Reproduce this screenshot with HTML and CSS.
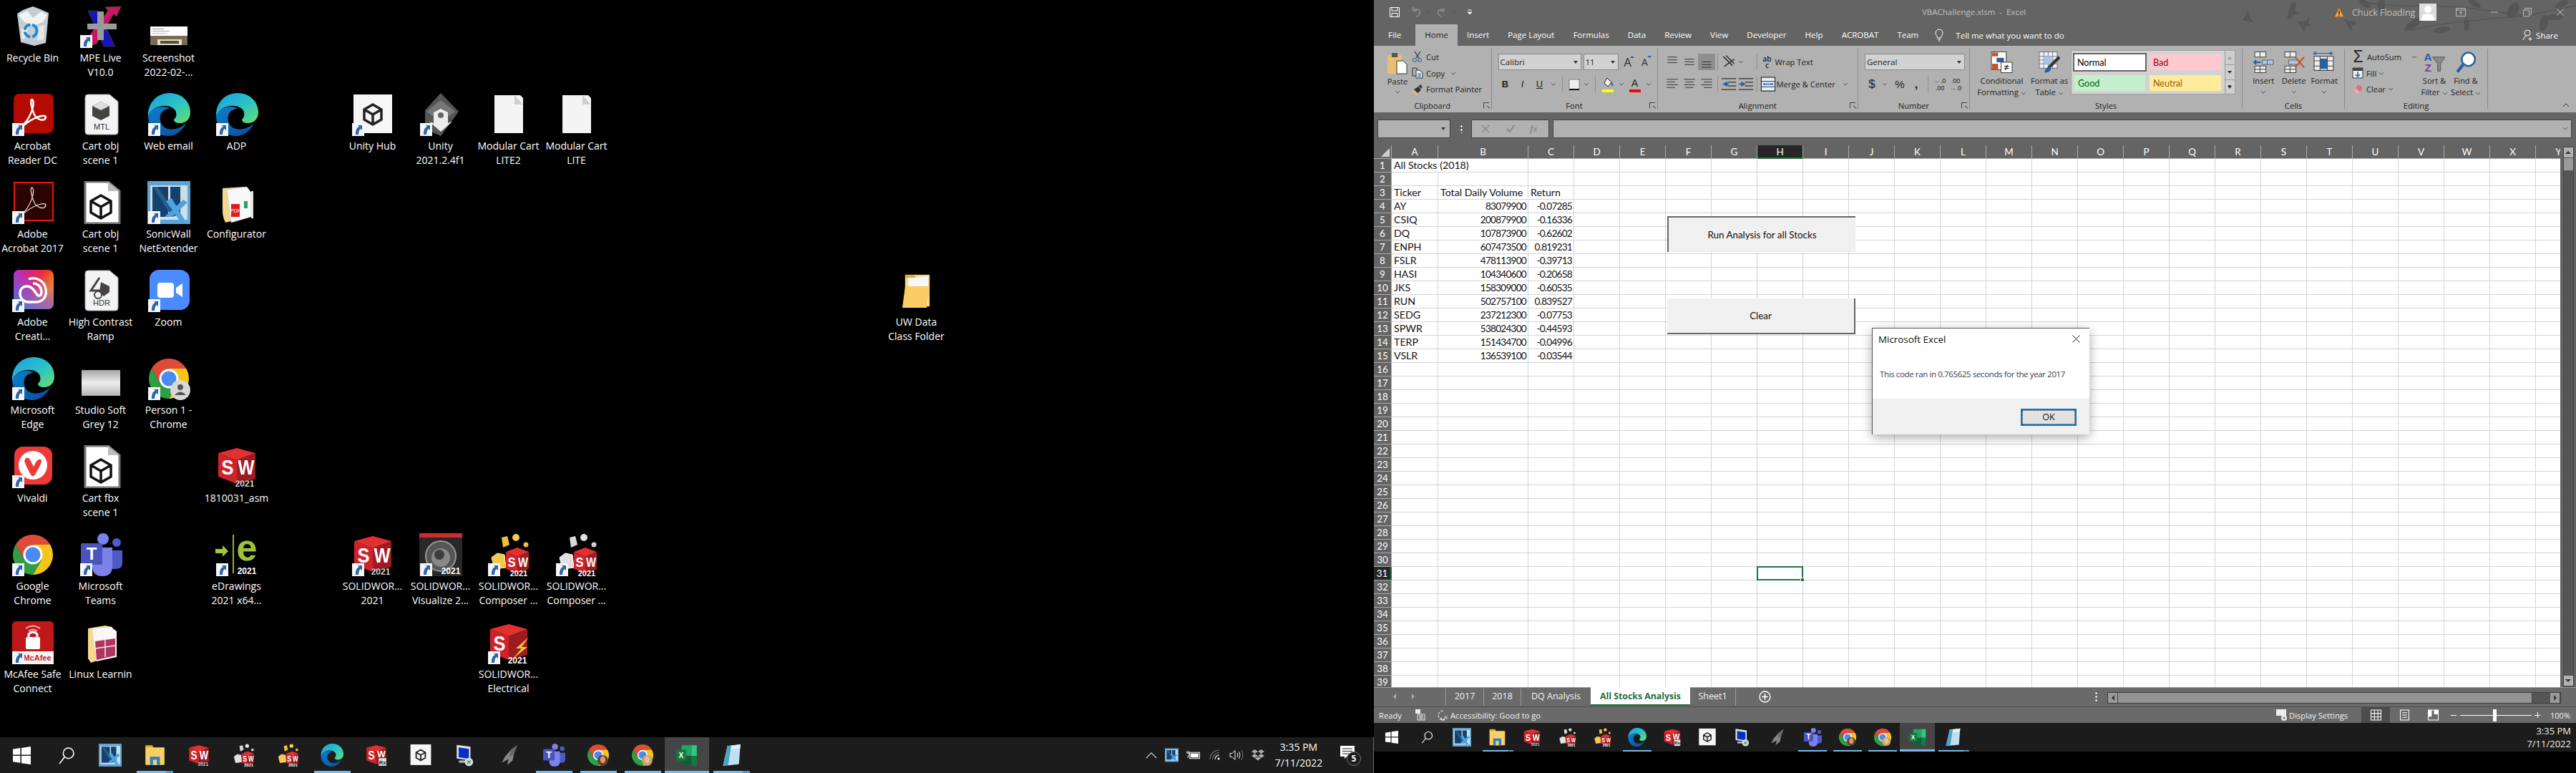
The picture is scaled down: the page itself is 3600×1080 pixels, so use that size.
FILE: index.html
```html
<!DOCTYPE html>
<html lang="en">
<head>
<meta charset="utf-8">
<title>Dual monitor desktop with Excel</title>
<link rel="stylesheet" href="styles.css">
</head>
<body>
<svg class="sprite" aria-hidden="true">
<defs>
<linearGradient id="edgeG" x1="0" y1="0" x2="1" y2="1"><stop offset="0" stop-color="#1b9de2"/><stop offset=".55" stop-color="#2cc4c4"/><stop offset="1" stop-color="#6be06a"/></linearGradient>
<linearGradient id="edgeB" x1="0" y1="0" x2="1" y2="1"><stop offset="0" stop-color="#0d7fd0"/><stop offset="1" stop-color="#0b4c98"/></linearGradient>
<linearGradient id="ccG" x1="0" y1="0" x2="1" y2="1"><stop offset="0" stop-color="#e0107c"/><stop offset=".4" stop-color="#f6301f"/><stop offset=".7" stop-color="#f7b500"/><stop offset="1" stop-color="#7fd35a"/></linearGradient>
<linearGradient id="ccB" x1="0" y1="1" x2="1" y2="0"><stop offset="0" stop-color="#1e88e5"/><stop offset=".5" stop-color="#a13de0" stop-opacity=".7"/><stop offset="1" stop-color="#e0107c" stop-opacity="0"/></linearGradient>
<linearGradient id="greyG" x1="0" y1="0" x2="0" y2="1"><stop offset="0" stop-color="#a6a6a6"/><stop offset=".5" stop-color="#eeeeee"/><stop offset="1" stop-color="#b4b4b4"/></linearGradient>
</defs>
</svg>
<svg class="sprite-lib" aria-hidden="true">
<symbol id="short" viewBox="0 0 17 18"><rect width="17" height="18" fill="#f4f6f8"/><path d="M5 16 C5 9 7 6 10 5 L8 3 L14 3 L14 10 L12 8 C10 9 9 12 9 16Z" fill="#2a62a8"/></symbol>
<symbol id="recycle" viewBox="0 0 60 60"><path d="M8 12 L16 7 L24 4 L30 2 L38 5 L52 11 L48 53 L32 57 L13 52Z" fill="#c6cdd1"/><path d="M10 14 L22 8 L30 18 L42 9 L50 14 L44 24 L32 28 L18 24Z" fill="#f1f3f4"/><path d="M14 34 L24 28 L20 46 L14 48Z" fill="#e9ecee"/><path d="M38 30 L46 28 L45 48 L36 50Z" fill="#e3e6e8"/><circle cx="27" cy="36" r="8.500" fill="none" stroke="#1f86d6" stroke-width="4" stroke-dasharray="11 3"/></symbol>
<symbol id="mpe" viewBox="0 0 60 60"><path d="M12 8 L26 8 L50 58 L34 58Z" fill="#1616b8" stroke="#333"/><path d="M58 2 L52 16 L48 12 L24 54 L12 58 L10 48 L40 8 L36 3Z" fill="#c8175f" stroke="#444"/><path d="M25 9 H34 V26 H52 V34 H34 V49 H25 V34 H11 V26 H25Z" fill="#9a9a9a"/></symbol>
<symbol id="thumb" viewBox="0 0 60 60"><rect x="4" y="30" width="52" height="26" fill="#fff"/><rect x="7" y="33" width="16" height="1" fill="#999"/><rect x="7" y="36" width="24" height="1" fill="#aaa"/><rect x="7" y="39" width="20" height="1" fill="#bbb"/><rect x="4" y="43" width="52" height="13" fill="#7d6a52"/><rect x="14" y="48" width="34" height="8" fill="#ddd"/><rect x="18" y="50" width="26" height="4" fill="#552"/></symbol>
<symbol id="acro" viewBox="0 0 60 60"><rect x="3" y="1" width="56" height="55" rx="8" fill="#b30b00"/><path d="M14 46 C26 38 34 14 29 9 C26 8 27 20 32 30 C36 38 46 40 48 34 C48 28 30 34 16 46" fill="none" stroke="#fff" stroke-width="2.500"/></symbol>
<symbol id="acro17" viewBox="0 0 60 60"><rect x="4" y="2" width="54" height="53" fill="#2a0400" stroke="#e21a0a" stroke-width="2"/><path d="M14 46 C26 38 34 14 29 9 C26 8 27 20 32 30 C36 38 46 40 48 34 C48 28 30 34 16 46" fill="none" stroke="#e8d9d9" stroke-width="1.300"/></symbol>
<symbol id="mtl" viewBox="0 0 60 60"><path d="M12 2 H42 L54 12 V54 Q54 58 50 58 H12 Q8 58 8 54 V6 Q8 2 12 2Z" fill="#f3f3f3" stroke="#aaa"/><path d="M30 12 L42 18 V32 L30 38 L18 32 V18Z" fill="#444"/><path d="M30 12 L42 18 L30 24 L18 18Z" fill="#ddd"/><text x="31" y="51" class="svgt" font-size="11" text-anchor="middle" fill="#333">MTL</text></symbol>
<symbol id="hdr" viewBox="0 0 60 60"><path d="M12 2 H42 L54 12 V54 Q54 58 50 58 H12 Q8 58 8 54 V6 Q8 2 12 2Z" fill="#f3f3f3" stroke="#aaa"/><path d="M28 12 L16 30 L28 30 V34" fill="none" stroke="#444" stroke-width="3"/><path d="M30 18 L42 24 V32 L34 38 L28 32Z" fill="#444"/><circle cx="26" cy="36" r="5" fill="#f3f3f3" stroke="#444" stroke-width="2"/><text x="31" y="51" class="svgt" font-size="11" text-anchor="middle" fill="#333">HDR</text></symbol>
<symbol id="obj" viewBox="0 0 60 60"><path d="M8 1 H40 L56 14 V59 H8Z" fill="#fff" stroke="#777" stroke-width="3"/><path d="M40 1 V14 H56Z" fill="#bbb"/><path d="M30 20 L44 28 V44 L30 52 L16 44 V28Z M30 36 L16 28 M30 36 L44 28 M30 36 V52" fill="none" stroke="#111" stroke-width="3.500"/></symbol>
<symbol id="edge" viewBox="0 0 60 60"><path d="M31 0 C48 0 60 12 60 27 C60 37 53 42 46 42 C40 42 37 40 37 37 C42 33 42 24 34 20 C24 15 6 18 1 33 C0 14 13 0 31 0Z" fill="url(#edgeG)"/><path d="M1 33 C5 19 24 16 31 22 C20 22 15 32 19 42 C25 55 44 52 54 42 C50 52 40 60 29 60 C13 60 2 48 1 33Z" fill="url(#edgeB)"/></symbol>
<symbol id="sonic" viewBox="0 0 60 60"><rect width="60" height="60" fill="#5aa4d6"/><rect x="4" y="6" width="52" height="48" fill="#cfdde6"/><rect x="7" y="8" width="22" height="42" fill="#14426e"/><path d="M8 8 L14 8 L42 48 L34 50Z" fill="#245f8e"/><rect x="32" y="8" width="14" height="38" fill="#14426e"/><path d="M24 50 L50 26 L56 30 L34 50Z M26 28 L34 24 L52 54 L44 54Z" fill="#4ea3e2"/></symbol>
<symbol id="folderdoc" viewBox="0 0 60 60"><path d="M10 10 L40 8 L44 50 L14 58 Q10 50 10 42Z" fill="#f6d78e"/><path d="M16 12 L44 8 L50 16 V50 L22 58Z" fill="#f8f8f8" stroke="#bbb" stroke-width=".5"/><rect x="22" y="32" width="12" height="18" fill="#dc1e1e"/><text x="28" y="44" class="svgt" font-size="7" text-anchor="middle" fill="#fff">PDF</text><rect x="40" y="28" width="5" height="10" fill="#27a260"/><rect x="50" y="14" width="3" height="38" fill="#e6e6e6"/></symbol>
<symbol id="folder" viewBox="0 0 60 60"><path d="M12 10 L36 6 L46 8 V48 L16 58 L12 52Z" fill="#f6d98f"/><path d="M18 10 L44 8 L52 14 V50 L24 56Z" fill="#f8f8f8"/><path d="M22 28 L50 24 V48 L24 54Z" fill="#b0345e"/><path d="M22 38 L50 34 M36 26 V50" stroke="#eee" stroke-width="1.500"/></symbol>
<symbol id="yfolder" viewBox="0 0 60 60"><path d="M14 8 H48 V52 H14Z" fill="#f6d98f" stroke="#caa24e" stroke-width=".5"/><path d="M18 12 L46 10 V50 L20 54Z" fill="#f7f7f7"/><path d="M14 24 L48 24 L44 54 L10 54Z" fill="#f9cd63"/><path d="M14 8 H26 L29 12 H14Z" fill="#e2ab3a"/></symbol>
<symbol id="cc" viewBox="0 0 60 60"><rect x="3" y="1" width="56" height="55" rx="8" fill="url(#ccG)"/><rect x="3" y="1" width="56" height="55" rx="8" fill="url(#ccB)"/><path d="M24 14 C34 10 46 16 48 28 C50 38 44 46 34 46 H24 C16 46 12 40 12 34 C12 28 16 24 22 24 C28 24 32 30 36 36 C38 38 42 38 42 32 C42 26 38 20 30 20" fill="none" stroke="#fff" stroke-width="3.500"/></symbol>
<symbol id="zoom" viewBox="0 0 60 60"><rect x="3" y="1" width="56" height="56" rx="13" fill="#4a8cff"/><rect x="14" y="19" width="23" height="21" rx="4" fill="#fff"/><path d="M40 26 L49 20 V39 L40 33Z" fill="#fff"/></symbol>
<symbol id="grey" viewBox="0 0 60 60"><rect x="3" y="18" width="54" height="36" fill="url(#greyG)"/></symbol>
<symbol id="chrome" viewBox="0 0 60 60"><path d="M5.750 16 A28 28 0 0 1 54.250 16 L30 16 L17.900 37Z" fill="#dd4b39"/><path d="M54.250 16 A28 28 0 0 1 30 58 L42.100 37 L30 16Z" fill="#f5c518"/><path d="M30 58 A28 28 0 0 1 5.750 16 L17.900 37 L42.100 37Z" fill="#2f9e44"/><circle cx="30" cy="30" r="13.500" fill="#fff"/><circle cx="30" cy="30" r="10.500" fill="#4a8af4"/></symbol>
<symbol id="person" viewBox="0 0 60 60"><use href="#chrome"/><circle cx="46" cy="46" r="14" fill="#d8d8d8"/><circle cx="46" cy="42" r="4" fill="#555"/><path d="M38 53 Q46 44 54 53Z" fill="#555"/></symbol>
<symbol id="vivaldi" viewBox="0 0 60 60"><rect x="4" y="2" width="53" height="53" rx="12" fill="#ef3939"/><circle cx="30" cy="28" r="20" fill="#fff"/><path d="M20 18 C24 16 26 20 28 24 L31 30 L34 24 C36 20 42 18 42 22 C42 26 36 36 33 41 C31 44 29 44 27 41 C24 36 19 26 18 22Z" fill="#ef3939"/></symbol>
<symbol id="sw" viewBox="0 0 60 60"><path d="M30 4 L56 11 L30 21 L4 11Z" fill="#e23030"/><path d="M4 11 L30 21 V54 L4 44Z" fill="#cf2229"/><path d="M30 21 L56 11 V47 L30 54Z" fill="#9c1c22"/><text x="17" y="41" class="svgb" font-size="30" text-anchor="middle" textLength="17" lengthAdjust="spacingAndGlyphs" fill="#fff">S</text><text x="43" y="41" class="svgb" font-size="30" text-anchor="middle" textLength="23" lengthAdjust="spacingAndGlyphs" fill="#fff">W</text><text x="41" y="58" class="svgb" font-size="12" text-anchor="middle" fill="#fff" stroke="#000" stroke-width=".3">2021</text></symbol>
<symbol id="swrx" viewBox="0 0 60 60"><path d="M30 4 L56 11 L30 21 L4 11Z" fill="#e23030"/><path d="M4 11 L30 21 V54 L4 44Z" fill="#cf2229"/><path d="M30 21 L56 11 V47 L30 54Z" fill="#9c1c22"/><text x="17" y="41" class="svgb" font-size="30" text-anchor="middle" textLength="17" lengthAdjust="spacingAndGlyphs" fill="#fff">S</text><text x="43" y="36" class="svgb" font-size="24" text-anchor="middle" textLength="22" lengthAdjust="spacingAndGlyphs" fill="#fff">W</text><rect x="36" y="38" width="20" height="20" fill="#ddd"/><text x="46" y="54" class="svgb" font-size="14" text-anchor="middle" fill="#222">Rx</text></symbol>
<symbol id="edraw" viewBox="0 0 60 60"><rect x="24" y="2" width="2" height="54" fill="#8cb42c"/><path d="M0 22 H10 V17 L18 25 L10 33 V28 H0Z" fill="#a3c639"/><text x="44" y="38" class="svgb" font-size="52" text-anchor="middle" fill="#9cc13a">e</text><text x="44" y="57" class="svgb" font-size="12" text-anchor="middle" fill="#fff">2021</text></symbol>
<symbol id="visual" viewBox="0 0 60 60"><rect width="60" height="60" fill="#282828"/><rect width="60" height="6" fill="#d22a2a"/><circle cx="30" cy="32" r="21" fill="#555" stroke="#999" stroke-width="2"/><circle cx="30" cy="34" r="13" fill="#888"/><circle cx="28" cy="30" r="7" fill="#3c3c3c"/><text x="44" y="57" class="svgb" font-size="12" text-anchor="middle" fill="#fff">2021</text></symbol>
<symbol id="compY" viewBox="0 0 60 60"><path d="M6 34 L14 28 L24 30 L26 48 L10 50Z" fill="#f5c94a" stroke="#fff3c0"/><path d="M20 6 L28 4 L31 16 L22 20Z" fill="#f5bd3a"/><circle cx="40" cy="6" r="5" fill="#f5c94a"/><circle cx="54" cy="16" r="3.500" fill="#f5bd3a"/><path d="M42 20 L58 26 L42 33 L26 26Z" fill="#e23030"/><path d="M26 26 L42 33 V56 L26 50Z" fill="#cf2229"/><path d="M42 33 L58 26 V50 L42 56Z" fill="#9c1c22"/><text x="34" y="47" class="svgb" font-size="19" text-anchor="middle" textLength="11" lengthAdjust="spacingAndGlyphs" fill="#fff">S</text><text x="50" y="47" class="svgb" font-size="19" text-anchor="middle" textLength="14" lengthAdjust="spacingAndGlyphs" fill="#fff">W</text><text x="44" y="60" class="svgb" font-size="11" text-anchor="middle" fill="#fff">2021</text></symbol>
<symbol id="compW" viewBox="0 0 60 60"><path d="M6 34 L14 28 L24 30 L26 48 L10 50Z" fill="#e0e0e0" stroke="#fff"/><path d="M20 6 L28 4 L31 16 L22 20Z" fill="#d8d8d8"/><circle cx="40" cy="6" r="5" fill="#e0e0e0"/><circle cx="54" cy="16" r="3.500" fill="#d0d0d0"/><path d="M42 20 L58 26 L42 33 L26 26Z" fill="#e23030"/><path d="M26 26 L42 33 V56 L26 50Z" fill="#cf2229"/><path d="M42 33 L58 26 V50 L42 56Z" fill="#9c1c22"/><text x="34" y="47" class="svgb" font-size="19" text-anchor="middle" textLength="11" lengthAdjust="spacingAndGlyphs" fill="#fff">S</text><text x="50" y="47" class="svgb" font-size="19" text-anchor="middle" textLength="14" lengthAdjust="spacingAndGlyphs" fill="#fff">W</text><text x="44" y="60" class="svgb" font-size="11" text-anchor="middle" fill="#fff">2021</text></symbol>
<symbol id="elec" viewBox="0 0 60 60"><path d="M30 4 L56 11 L30 21 L4 11Z" fill="#e23030"/><path d="M4 11 L30 21 V54 L4 44Z" fill="#cf2229"/><path d="M30 21 L56 11 V47 L30 54Z" fill="#9c1c22"/><text x="17" y="41" class="svgb" font-size="30" text-anchor="middle" textLength="17" lengthAdjust="spacingAndGlyphs" fill="#fff">S</text><path d="M58 22 L40 38 L48 38 L36 52 L56 36 L48 36Z" fill="#f0c83c"/><text x="42" y="59" class="svgb" font-size="12" text-anchor="middle" fill="#fff">2021</text></symbol>
<symbol id="teams" viewBox="0 0 60 60"><circle cx="33" cy="8" r="8" fill="#7b83eb"/><circle cx="52" cy="13" r="6" fill="#5059c9"/><path d="M42 24 H60 V42 Q60 50 50 50 L42 50Z" fill="#5059c9"/><path d="M18 20 H46 V46 Q46 60 32 60 Q18 60 18 46Z" fill="#7b83eb"/><rect x="2" y="14" width="30" height="30" rx="2" fill="#4b53bc"/><text x="17" y="37" class="svgb" font-size="24" text-anchor="middle" fill="#fff">T</text></symbol>
<symbol id="mcafee" viewBox="0 0 60 60"><path d="M1 6 Q1 0 7 0 H53 Q59 0 59 6 V44 H1Z" fill="#c01818"/><rect x="1" y="42" width="58" height="18" fill="#f5f5f5"/><rect x="20" y="22" width="20" height="17" rx="2" fill="#fff"/><path d="M24 23 V18 Q30 12 36 18 V23" fill="none" stroke="#fff" stroke-width="3"/><path d="M20 10 Q30 3 40 10 M24 14 Q30 9 36 14" fill="none" stroke="#f0b0b0" stroke-width="2"/><text x="36" y="55" class="svgb" font-size="11" text-anchor="middle" fill="#d02020">McAfee</text></symbol>
<symbol id="uhub" viewBox="0 0 60 60"><rect x="3" y="2" width="54" height="54" fill="#f6f6f6"/><path d="M30 16 L42 23 V37 L30 44 L18 37 V23Z M30 30 L42 23 M30 30 V44 M30 30 L18 23" fill="none" stroke="#222" stroke-width="3.500"/></symbol>
<symbol id="unity" viewBox="0 0 60 60"><path d="M30 0 L55 26 L30 60 L8 50 V24Z" fill="#555"/><path d="M30 10 L50 26 L30 40 L10 26Z" fill="#777"/><path d="M30 22 L40 27 V42 L46 40 L30 54 L14 40 L20 42 V27Z" fill="#ececec"/><circle cx="30" cy="31" r="4" fill="#666"/></symbol>
<symbol id="blank" viewBox="0 0 60 60"><path d="M10 3 H46 L50 7 V56 H10Z" fill="#f4f4f4"/><path d="M38 3 L50 16 H38Z" fill="#cfcfcf"/></symbol>
<symbol id="win" viewBox="0 0 24 24"><path d="M0 3.500 L10 2 V11 H0Z M11.500 1.800 L24 0 V11 H11.500Z M0 12.500 H10 V21.800 L0 20.500Z M11.500 12.500 H24 V24 L11.500 22.200Z" fill="#fff"/></symbol>
<symbol id="search" viewBox="0 0 24 24"><circle cx="15" cy="9" r="7" fill="none" stroke="#fff" stroke-width="1.500"/><path d="M10 14 L3 23" stroke="#fff" stroke-width="1.500"/></symbol>
<symbol id="explorer" viewBox="0 0 60 60"><path d="M6 4 H24 L28 12 H6Z" fill="#e9a43a"/><rect x="6" y="10" width="50" height="46" rx="2" fill="#fbd063"/><rect x="18" y="34" width="26" height="22" fill="#2f80c8"/><rect x="26" y="42" width="10" height="14" fill="#fbd063"/></symbol>
<symbol id="net" viewBox="0 0 60 60"><rect x="8" y="2" width="36" height="36" fill="#dde4ef" transform="skewY(8)"/><rect x="13" y="8" width="27" height="26" fill="#0a2ec2" transform="skewY(8)"/><rect x="14" y="44" width="22" height="6" fill="#bbb"/><circle cx="40" cy="48" r="11" fill="#d9d9d9"/><path d="M35 52 L45 44 M37 44 L43 52" stroke="#27a74a" stroke-width="2.500"/></symbol>
<symbol id="rocket" viewBox="0 0 60 60"><path d="M50 4 L42 26 L38 44 L24 56 L28 40 L10 50 L18 34 L34 16Z" fill="#888"/><path d="M50 4 L42 26 L30 36 L34 16Z" fill="#666"/></symbol>
<symbol id="chromeface" viewBox="0 0 60 60"><use href="#chrome"/><circle cx="42" cy="44" r="14" fill="#6a3a2a"/><ellipse cx="42" cy="42" rx="7" ry="9" fill="#d99a7c"/></symbol>
<symbol id="chromeface2" viewBox="0 0 60 60"><use href="#chrome"/><circle cx="42" cy="44" r="14" fill="#c9a06a"/><ellipse cx="42" cy="42" rx="7" ry="9" fill="#e7bda0"/></symbol>
<symbol id="xl" viewBox="0 0 60 60"><path d="M16 4 H42 V32 H16Z" fill="#21a366"/><path d="M42 4 H54 Q56 4 56 6 V32 H42Z" fill="#33c481"/><path d="M16 32 H42 V58 H18 Q16 58 16 56Z" fill="#185c37"/><path d="M42 32 H56 V56 Q56 58 54 58 H42Z" fill="#107c41"/><rect x="2" y="16" width="26" height="28" rx="2" fill="#107c41"/><text x="15" y="37" class="svgb" font-size="19" text-anchor="middle" fill="#fff">X</text></symbol>
<symbol id="note" viewBox="0 0 60 60"><path d="M20 6 L54 2 L50 54 L8 58Z" fill="#bfe0ef"/><path d="M20 6 L54 2 L53 12 L18 16Z" fill="#dff1f8"/><path d="M8 58 L20 6 L30 5 L22 56Z" fill="#4aa5c4"/></symbol>
<symbol id="chev" viewBox="0 0 8 5"><path d="M1 1 L4 4 L7 1" fill="none" stroke="#555" stroke-width="1"/></symbol>
<symbol id="alT" viewBox="0 0 24 24"><path d="M5 5 H19 M5 9 H19 M5 13 H19" stroke="#333"/></symbol>
<symbol id="alM" viewBox="0 0 24 24"><path d="M5 8 H19 M5 12 H19 M5 16 H19" stroke="#333"/></symbol>
<symbol id="alB" viewBox="0 0 24 24"><path d="M5 12 H19 M5 16 H19 M5 20 H19" stroke="#333"/></symbol>
<symbol id="jL" viewBox="0 0 24 24"><path d="M4 5 H20 M4 9 H16 M4 13 H20 M4 17 H16" stroke="#333"/></symbol>
<symbol id="jC" viewBox="0 0 24 24"><path d="M4 5 H20 M6 9 H18 M4 13 H20 M6 17 H18" stroke="#333"/></symbol>
<symbol id="jR" viewBox="0 0 24 24"><path d="M4 5 H20 M8 9 H20 M4 13 H20 M8 17 H20" stroke="#333"/></symbol>
</svg>

<div class="screens">
<section class="monitor-left">
<div class="desktop">
<div class="dgrid">
<div class="di c0 r0"><div class="dico"><svg class="ic"><use href="#recycle"/></svg></div><div class="dl">Recycle Bin</div></div>
<div class="di c1 r0"><div class="dico"><svg class="ic"><use href="#mpe"/></svg><svg class="sc"><use href="#short"/></svg></div><div class="dl">MPE Live<br>V10.0</div></div>
<div class="di c2 r0"><div class="dico"><svg class="ic"><use href="#thumb"/></svg></div><div class="dl">Screenshot<br>2022-02-...</div></div>
<div class="di c0 r1"><div class="dico"><svg class="ic"><use href="#acro"/></svg><svg class="sc"><use href="#short"/></svg></div><div class="dl">Acrobat<br>Reader DC</div></div>
<div class="di c1 r1"><div class="dico"><svg class="ic"><use href="#mtl"/></svg></div><div class="dl">Cart obj<br>scene 1</div></div>
<div class="di c2 r1"><div class="dico"><svg class="ic"><use href="#edge"/></svg><svg class="sc"><use href="#short"/></svg></div><div class="dl">Web email</div></div>
<div class="di c3 r1"><div class="dico"><svg class="ic"><use href="#edge"/></svg><svg class="sc"><use href="#short"/></svg></div><div class="dl">ADP</div></div>
<div class="di c5 r1"><div class="dico"><svg class="ic"><use href="#uhub"/></svg><svg class="sc"><use href="#short"/></svg></div><div class="dl">Unity Hub</div></div>
<div class="di c6 r1"><div class="dico"><svg class="ic"><use href="#unity"/></svg><svg class="sc"><use href="#short"/></svg></div><div class="dl">Unity<br>2021.2.4f1</div></div>
<div class="di c7 r1"><div class="dico"><svg class="ic"><use href="#blank"/></svg></div><div class="dl">Modular Cart<br>LITE2</div></div>
<div class="di c8 r1"><div class="dico"><svg class="ic"><use href="#blank"/></svg></div><div class="dl">Modular Cart<br>LITE</div></div>
<div class="di c0 r2"><div class="dico"><svg class="ic"><use href="#acro17"/></svg><svg class="sc"><use href="#short"/></svg></div><div class="dl">Adobe<br>Acrobat 2017</div></div>
<div class="di c1 r2"><div class="dico"><svg class="ic"><use href="#obj"/></svg></div><div class="dl">Cart obj<br>scene 1</div></div>
<div class="di c2 r2"><div class="dico"><svg class="ic"><use href="#sonic"/></svg><svg class="sc"><use href="#short"/></svg></div><div class="dl">SonicWall<br>NetExtender</div></div>
<div class="di c3 r2"><div class="dico"><svg class="ic"><use href="#folderdoc"/></svg></div><div class="dl">Configurator</div></div>
<div class="di c0 r3"><div class="dico"><svg class="ic"><use href="#cc"/></svg><svg class="sc"><use href="#short"/></svg></div><div class="dl">Adobe<br>Creati...</div></div>
<div class="di c1 r3"><div class="dico"><svg class="ic"><use href="#hdr"/></svg></div><div class="dl">High Contrast<br>Ramp</div></div>
<div class="di c2 r3"><div class="dico"><svg class="ic"><use href="#zoom"/></svg><svg class="sc"><use href="#short"/></svg></div><div class="dl">Zoom</div></div>
<div class="di c13 r3"><div class="dico"><svg class="ic"><use href="#yfolder"/></svg></div><div class="dl">UW Data<br>Class Folder</div></div>
<div class="di c0 r4"><div class="dico"><svg class="ic"><use href="#edge"/></svg><svg class="sc"><use href="#short"/></svg></div><div class="dl">Microsoft<br>Edge</div></div>
<div class="di c1 r4"><div class="dico"><svg class="ic"><use href="#grey"/></svg></div><div class="dl">Studio Soft<br>Grey 12</div></div>
<div class="di c2 r4"><div class="dico"><svg class="ic"><use href="#person"/></svg><svg class="sc"><use href="#short"/></svg></div><div class="dl">Person 1 -<br>Chrome</div></div>
<div class="di c0 r5"><div class="dico"><svg class="ic"><use href="#vivaldi"/></svg><svg class="sc"><use href="#short"/></svg></div><div class="dl">Vivaldi</div></div>
<div class="di c1 r5"><div class="dico"><svg class="ic"><use href="#obj"/></svg></div><div class="dl">Cart fbx<br>scene 1</div></div>
<div class="di c3 r5"><div class="dico"><svg class="ic"><use href="#sw"/></svg></div><div class="dl">1810031_asm</div></div>
<div class="di c0 r6"><div class="dico"><svg class="ic"><use href="#chrome"/></svg><svg class="sc"><use href="#short"/></svg></div><div class="dl">Google<br>Chrome</div></div>
<div class="di c1 r6"><div class="dico"><svg class="ic"><use href="#teams"/></svg><svg class="sc"><use href="#short"/></svg></div><div class="dl">Microsoft<br>Teams</div></div>
<div class="di c3 r6"><div class="dico"><svg class="ic"><use href="#edraw"/></svg><svg class="sc"><use href="#short"/></svg></div><div class="dl">eDrawings<br>2021 x64...</div></div>
<div class="di c5 r6"><div class="dico"><svg class="ic"><use href="#sw"/></svg><svg class="sc"><use href="#short"/></svg></div><div class="dl">SOLIDWOR...<br>2021</div></div>
<div class="di c6 r6"><div class="dico"><svg class="ic"><use href="#visual"/></svg><svg class="sc"><use href="#short"/></svg></div><div class="dl">SOLIDWOR...<br>Visualize 2...</div></div>
<div class="di c7 r6"><div class="dico"><svg class="ic"><use href="#compY"/></svg><svg class="sc"><use href="#short"/></svg></div><div class="dl">SOLIDWOR...<br>Composer ...</div></div>
<div class="di c8 r6"><div class="dico"><svg class="ic"><use href="#compW"/></svg><svg class="sc"><use href="#short"/></svg></div><div class="dl">SOLIDWOR...<br>Composer ...</div></div>
<div class="di c0 r7"><div class="dico"><svg class="ic"><use href="#mcafee"/></svg><svg class="sc"><use href="#short"/></svg></div><div class="dl">McAfee Safe<br>Connect</div></div>
<div class="di c1 r7"><div class="dico"><svg class="ic"><use href="#folder"/></svg></div><div class="dl">Linux Learnin</div></div>
<div class="di c7 r7"><div class="dico"><svg class="ic"><use href="#elec"/></svg><svg class="sc"><use href="#short"/></svg></div><div class="dl">SOLIDWOR...<br>Electrical</div></div>
</div>
</div>
<footer class="taskbar tb-left">
<div class="tb-start"><svg class="tb-win"><use href="#win"/></svg></div>
<div class="tb-start"><svg class="tb-search"><use href="#search"/></svg></div>
<div class="tb-i"><svg><use href="#sonic"/></svg></div>
<div class="tb-i on stacked"><svg><use href="#explorer"/></svg></div>
<div class="tb-i"><svg><use href="#sw"/></svg></div>
<div class="tb-i"><svg><use href="#compW"/></svg></div>
<div class="tb-i"><svg><use href="#compY"/></svg></div>
<div class="tb-i on"><svg><use href="#edge"/></svg></div>
<div class="tb-i"><svg><use href="#swrx"/></svg></div>
<div class="tb-i"><svg><use href="#uhub"/></svg></div>
<div class="tb-i"><svg><use href="#net"/></svg></div>
<div class="tb-i"><svg><use href="#rocket"/></svg></div>
<div class="tb-i on"><svg><use href="#teams"/></svg></div>
<div class="tb-i on"><svg><use href="#chromeface"/></svg></div>
<div class="tb-i on"><svg><use href="#chromeface2"/></svg></div>
<div class="tb-i active"><svg><use href="#xl"/></svg></div>
<div class="tb-i on stacked"><svg><use href="#note"/></svg></div>
<div class="tray">
<svg class="t-chev" viewBox="0 0 18 10"><path d="M1 9 L9 1 L17 9" fill="none" stroke="#eee" stroke-width="1.300"/></svg>
<svg class="t-n"><use href="#sonic"/></svg>
<svg class="t-bat" viewBox="0 0 22 14"><path d="M2 1 V4 M4.500 1 V4 M1 4 H5.500 V6 Q3 8 3 11" fill="none" stroke="#fff"/><rect x="5.500" y="3" width="15" height="9" fill="none" stroke="#fff"/><rect x="7" y="4.500" width="12" height="6" fill="#fff"/></svg>
<svg class="t-wifi" viewBox="0 0 16 16"><path d="M1 14 A13 13 0 0 1 14 1 M4.500 14 A9.500 9.500 0 0 1 14 4.500" fill="none" stroke="#777" stroke-width="1.100"/><path d="M8 14 A6 6 0 0 1 14 8" fill="none" stroke="#eee" stroke-width="1.200"/><circle cx="13" cy="13" r="1.500" fill="#fff"/></svg>
<svg class="t-vol" viewBox="0 0 20 16"><path d="M1 5.500 H4 L8 1.500 V14.500 L4 10.500 H1Z" fill="none" stroke="#eee"/><path d="M11 5 Q13 8 11 11 M13.500 3 Q16.500 8 13.500 13" fill="none" stroke="#eee"/><path d="M17 1 Q20.500 8 17 15" fill="none" stroke="#777"/></svg>
<svg class="t-drop" viewBox="0 0 18 16"><path d="M4.500 0 L9 3 L4.500 6 L0 3Z M13.500 0 L18 3 L13.500 6 L9 3Z M4.500 6 L9 9 L4.500 12 L0 9Z M13.500 6 L18 9 L13.500 12 L9 9Z M9 10 L13 12.800 L9 15.500 L5 12.800Z" fill="#aaa"/></svg>
<div class="clock"><span>3:35 PM</span><span>7/11/2022</span></div>
<div class="notif"><svg class="t-note" viewBox="0 0 20 18"><path d="M0 0 H20 V15 H9 L6 18 V15 H0Z" fill="#fff"/><path d="M3 4 H17 M3 7.500 H17 M3 11 H12" stroke="#222"/></svg><span class="nbadge">5</span></div>
<div class="desk-edge"></div>
</div>
</footer>
</section>

<section class="monitor-right">
<main class="excel">
<div class="head">
<svg class="birds" viewBox="0 0 500 64" aria-hidden="true">
<g fill="#565656">
<path d="M34 28 L42 14 L44 24 L50 31 L40 30Z"/><path d="M96 25 L102 4 L108 3 L108 16 L116 18 L106 21 L100 27Z"/><path d="M110 31 L122 29 L128 23 L126 33 L131 35 L122 37 L120 45 L116 37Z"/><path d="M175 26 L185 30 L190 28 L193 33 L186 36 L187 45 L181 36Z"/>
<ellipse cx="205" cy="5" rx="9" ry="4" transform="rotate(30 205 5)"/><ellipse cx="228" cy="8" rx="5" ry="10"/><ellipse cx="272" cy="34" rx="14" ry="5" transform="rotate(-35 272 34)"/><ellipse cx="312" cy="42" rx="12" ry="4" transform="rotate(-10 312 42)"/><ellipse cx="347" cy="34" rx="4" ry="9"/><ellipse cx="412" cy="14" rx="7" ry="12" transform="rotate(30 412 14)"/><ellipse cx="455" cy="32" rx="6" ry="12" transform="rotate(15 455 32)"/><ellipse cx="470" cy="24" rx="12" ry="4"/><ellipse cx="358" cy="5" rx="10" ry="4" transform="rotate(30 358 5)"/><ellipse cx="480" cy="6" rx="10" ry="4" transform="rotate(-25 480 6)"/>
</g>
<path d="M200 2 C240 10 290 8 340 10 L430 22 L500 8 M270 42 C310 32 360 28 430 22" fill="none" stroke="#565656" stroke-width="1.500"/>
</svg>
<header class="titlebar">
<div class="qat">
<svg class="q-save" viewBox="0 0 14 14"><path d="M.5.5 H13.500 V13.500 H.5Z M3 .5 V5 H11 V.5 M3 13.500 V8.500 H11 V13.500" fill="none" stroke="#fff"/></svg>
<svg class="q-undo" viewBox="0 0 16 16"><path d="M4 1 V6 H9 M4 6 Q8 2 12 5 Q16 10 8 15" fill="none" stroke="#8a8a8a" stroke-width="2"/></svg>
<svg class="chev q-c1"><use href="#chev"/></svg>
<svg class="q-redo" viewBox="0 0 16 16"><path d="M12 1 V6 H7 M12 6 Q8 2 4 5 Q0 10 8 15" fill="none" stroke="#8a8a8a" stroke-width="2"/></svg>
<svg class="chev q-c2"><use href="#chev"/></svg>
<svg class="q-cust" viewBox="0 0 8 8"><path d="M1 1 H7 M1 4 H7 L4 7Z" stroke="#eee" fill="#eee"/></svg>
</div>
<div class="doc-title">VBAChallenge.xlsm  -  Excel</div>
<div class="win-area">
<svg class="warn" viewBox="0 0 14 14"><path d="M7 1 L13 13 H1Z" fill="#e9a35a" stroke="#a75b18"/><rect x="6.400" y="5" width="1.200" height="5" fill="#222"/><rect x="6.400" y="10.800" width="1.200" height="1.200" fill="#222"/></svg>
<span class="user">Chuck Floading</span>
<svg class="avatar" viewBox="0 0 24 24"><rect width="24" height="24" fill="#ddd"/><circle cx="12" cy="8" r="5" fill="#fff"/><path d="M3 24 Q3 14 12 14 Q21 14 21 24Z" fill="#fff"/></svg>
<svg class="w-disp" viewBox="0 0 14 12"><path d="M.5.5 H13.500 V11.500 H.5Z M.5 3 H13.500 M7 10 V5 M5 7 L7 5 L9 7" fill="none" stroke="#bbb"/></svg>
<svg class="w-min" viewBox="0 0 12 12"><path d="M1 6 H11" stroke="#bbb"/></svg>
<svg class="w-max" viewBox="0 0 12 12"><path d="M.5 3 H8.500 V11.500 H.5Z M3 3 V.5 H11.500 V9 H8.500" fill="none" stroke="#bbb"/></svg>
<svg class="w-x" viewBox="0 0 12 12"><path d="M1 1 L11 11 M11 1 L1 11" stroke="#bbb"/></svg>
</div>
</header>
<nav class="tabs">
<span class="tab t-file">File</span>
<span class="tab tab-on">Home</span>
<span class="tab">Insert</span>
<span class="tab">Page Layout</span>
<span class="tab">Formulas</span>
<span class="tab">Data</span>
<span class="tab">Review</span>
<span class="tab">View</span>
<span class="tab">Developer</span>
<span class="tab">Help</span>
<span class="tab">ACROBAT</span>
<span class="tab">Team</span>
<svg class="bulb" viewBox="0 0 12 18"><path d="M3.500 13 C3.500 10 1 9 1 6 A5 5 0 0 1 11 6 C11 9 8.500 10 8.500 13Z M4 15 H8 M5 17 H7" fill="none" stroke="#fff"/></svg>
<span class="tell">Tell me what you want to do</span>
<span class="share"><svg class="share-i" viewBox="0 0 16 16"><circle cx="7" cy="5" r="4" fill="none" stroke="#fff"/><path d="M1 15 Q2 10 6 9 M11 11 V16 M8.500 13.500 H13.500" fill="none" stroke="#fff"/></svg>Share</span>
</nav>
</div>

<div class="ribbon">
<section class="group g-clip">
<div class="gbody row">
<div class="paste">
<svg class="paste-i" viewBox="0 0 30 30"><rect x="1" y="3" width="20" height="26" rx="1" fill="#e6bf70"/><rect x="7" y="0" width="8" height="6" fill="#555"/><path d="M14 11 H23 L28 16 V29 H14Z" fill="#fff" stroke="#333"/></svg>
<span class="lbl">Paste</span>
<svg class="chev"><use href="#chev"/></svg>
</div>
<div class="col3">
<div class="sm"><svg class="i16" viewBox="0 0 16 16"><path d="M4 1 L10 10 M12 1 L6 10" stroke="#333" stroke-width="1.300"/><circle cx="4" cy="13" r="2.500" fill="none" stroke="#2a5fa0"/><circle cx="11" cy="13" r="2.500" fill="none" stroke="#2a5fa0"/></svg><span class="lbl">Cut</span></div>
<div class="sm"><svg class="i16" viewBox="0 0 16 16"><path d="M1 1 H7 V12 H1Z" fill="none" stroke="#333"/><path d="M6 4 H11 L15 8 V15 H6Z" fill="#eee" stroke="#333"/><path d="M8 9 H13 M8 11 H13 M8 13 H13" stroke="#2a5fa0"/></svg><span class="lbl">Copy</span><svg class="chev m8"><use href="#chev"/></svg></div>
<div class="sm"><svg class="i16" viewBox="0 0 16 16"><path d="M1 9 L8 13 L7 16 Q2 15 1 9Z" fill="#e6bf70"/><path d="M3 8 L9 4 L13 9 L8 13Z" fill="#333"/><path d="M9 3 L13 1 L15 5 L12 7Z" fill="#444"/></svg><span class="lbl">Format Painter</span></div>
</div>
</div>
<div class="glabel">Clipboard<i class="launch"></i></div>
</section>

<section class="group g-font">
<div class="gbody stack">
<div class="r-top f-top">
<div class="combo w116"><span>Calibri</span><b class="tri"></b></div>
<div class="combo w49"><span>11</span><b class="tri"></b></div>
<span class="grow">A<i class="up"></i></span><span class="shrink">A<i class="down"></i></span>
</div>
<div class="r-bot f-bot">
<b class="tbtn">B</b><i class="tbtn ital">I</i><u class="tbtn">U</u><svg class="chev"><use href="#chev"/></svg><s class="vsep"></s>
<svg class="i16" viewBox="0 0 16 16"><rect x="1" y="1" width="14" height="14" fill="#eee" stroke="#333" stroke-dasharray="1 1"/><path d="M1 15 H15" stroke="#111" stroke-width="2"/></svg><svg class="chev"><use href="#chev"/></svg><s class="vsep"></s>
<span class="colored"><svg class="i16" viewBox="0 0 16 14"><path d="M7 1 L13 7 L8 13 L3 8Z" fill="#f4f4f4" stroke="#222"/><path d="M13 8 Q15 10 14 12" stroke="#2a5fa0" stroke-width="2" fill="none"/></svg><i class="bar yellow"></i></span><svg class="chev"><use href="#chev"/></svg>
<span class="colored letter">A<i class="bar red"></i></span><svg class="chev"><use href="#chev"/></svg>
</div>
</div>
<div class="glabel">Font<i class="launch"></i></div>
</section>

<section class="group g-align">
<div class="gbody stack">
<div class="r-top a-top">
<svg class="i24"><use href="#alT"/></svg><svg class="i24"><use href="#alM"/></svg><svg class="i24 sel"><use href="#alB"/></svg><s class="vsep"></s>
<svg class="i24" viewBox="0 0 18 18"><path d="M3 3 L13 13 M6 2 L15 11 M4 14 L15 6" stroke="#333" stroke-width="1.200" fill="none"/></svg><svg class="chev"><use href="#chev"/></svg><s class="vsep gap14"></s>
<span class="wrapi">ab<br>c</span><span class="lbl">Wrap Text</span>
</div>
<div class="r-bot a-bot">
<svg class="i24"><use href="#jL"/></svg><svg class="i24"><use href="#jC"/></svg><svg class="i24"><use href="#jR"/></svg><s class="vsep"></s>
<svg class="i24" viewBox="0 0 18 18"><path d="M8 3 H17 M8 7 H17 M8 11 H17 M1 15 H17 M1 3 H17" stroke="#333"/><path d="M7 7 L3 9 L7 11Z M3 9 H9" fill="#2a5fa0" stroke="#2a5fa0"/></svg>
<svg class="i24" viewBox="0 0 18 18"><path d="M1 3 H17 M8 7 H17 M8 11 H17 M1 15 H17" stroke="#333"/><path d="M4 7 L8 9 L4 11Z M1 9 H7" fill="#2a5fa0" stroke="#2a5fa0"/></svg><s class="vsep"></s>
<svg class="i24" viewBox="0 0 18 18"><rect x="1.500" y="1.500" width="15" height="15" fill="#eee" stroke="#333"/><path d="M1.500 6 H16.500 M1.500 12 H16.500 M4 9 H14 M5 8 L4 9 L5 10 M13 8 L14 9 L13 10" stroke="#2a5fa0"/></svg><span class="lbl">Merge &amp; Center</span><svg class="chev m12"><use href="#chev"/></svg>
</div>
</div>
<div class="glabel">Alignment<i class="launch"></i></div>
</section>

<section class="group g-num">
<div class="gbody stack">
<div class="r-top n-top"><div class="combo w140"><span>General</span><b class="tri"></b></div></div>
<div class="r-bot n-bot">
<span class="sym big">$</span><svg class="chev"><use href="#chev"/></svg><span class="sym pct">%</span><span class="sym comma">,</span><s class="vsep"></s>
<span class="dec"><em>←</em>.0<br>.00</span><span class="dec">.00<br><em>→</em>.0</span>
</div>
</div>
<div class="glabel">Number<i class="launch"></i></div>
</section>

<section class="group g-styles">
<div class="gbody row">
<div class="big-btn w80"><svg class="i34" viewBox="0 0 30 30"><path d="M1 1 H21 V25 H1Z" fill="#fff" stroke="#444"/><rect x="2" y="2" width="8" height="5" fill="#c8532a"/><rect x="8" y="9" width="10" height="6" fill="#2a5fa0"/><rect x="2" y="17" width="8" height="8" fill="#c8532a"/><path d="M14 15 H29 V29 H14Z" fill="#fff" stroke="#444"/><text x="21.500" y="26" class="svgb" font-size="11" text-anchor="middle" fill="#222">≠</text></svg><span class="lbl">Conditional<br>Formatting <svg class="chev"><use href="#chev"/></svg></span></div>
<div class="big-btn w52"><svg class="i34" viewBox="0 0 30 30"><path d="M1 1 H25 V23 H1Z M1 7 H25 M1 12 H25 M1 17 H25 M7 1 V23 M13 1 V23 M19 1 V23" fill="#eef" stroke="#555" stroke-width=".7"/><rect x="7" y="7" width="12" height="10" fill="#a9c6e4"/><path d="M28 8 L14 22" stroke="#333" stroke-width="4"/><path d="M14 20 Q8 24 8 29 Q16 29 17 23Z" fill="#2a5fa0"/></svg><span class="lbl">Format as<br>Table <svg class="chev"><use href="#chev"/></svg></span></div>
<div class="gallery">
<div class="cells-g">
<span class="st st-normal">Normal</span><span class="st st-bad">Bad</span><span class="st st-good">Good</span><span class="st st-neutral">Neutral</span>
</div>
<div class="gscroll"><b class="up-g"></b><b class="dn-g"></b><b class="more-g"></b></div>
</div>
</div>
<div class="glabel">Styles</div>
</section>

<section class="group g-cells">
<div class="gbody row">
<div class="big-btn w42"><svg class="i34" viewBox="0 0 30 30"><path d="M3 1 H18 V8 H3Z M10 1 V8 M3 20 H18 V29 H3Z M10 20 V29 M3 24.500 H18" fill="#eee" stroke="#444"/><path d="M13 12 H28 V18 H13Z M20 12 V18" fill="#a9c6e4" stroke="#444" stroke-width=".7"/><path d="M2 15 H11 M5 12 L2 15 L5 18" stroke="#2a5fa0" stroke-width="2" fill="none"/></svg><span class="lbl">Insert</span><svg class="chev"><use href="#chev"/></svg></div>
<div class="big-btn w42"><svg class="i34" viewBox="0 0 30 30"><path d="M3 1 H18 V8 H3Z M10 1 V8 M3 20 H18 V29 H3Z M10 20 V29 M3 24.500 H18" fill="#eee" stroke="#444"/><path d="M8 12 H22 V18 H8Z" fill="#a9c6e4" stroke="#444" stroke-width=".7"/><path d="M17 8 L29 22 M29 8 L17 22" stroke="#c8532a" stroke-width="2"/></svg><span class="lbl">Delete</span><svg class="chev"><use href="#chev"/></svg></div>
<div class="big-btn w42"><svg class="i34" viewBox="0 0 30 30"><path d="M1 3 H25 M1 1 V5 M25 1 V5 M4 1 L1 3 L4 5 M22 1 L25 3 L22 5" fill="none" stroke="#2a5fa0"/><path d="M1 7 H27 V26 H1Z M9 7 V26 M19 7 V26 M1 13 H27 M1 20 H27" fill="#eee" stroke="#444"/><rect x="9" y="10" width="10" height="14" fill="#2a5fa0"/></svg><span class="lbl">Format</span><svg class="chev"><use href="#chev"/></svg></div>
</div>
<div class="glabel">Cells</div>
</section>

<section class="group g-edit">
<div class="gbody row">
<div class="col3 w100">
<div class="sm"><span class="sigma">Σ</span><span class="lbl">AutoSum</span><svg class="chev m14"><use href="#chev"/></svg></div>
<div class="sm"><svg class="i16" viewBox="0 0 16 16"><path d="M1 1 H15 V15 H1Z" fill="#eee" stroke="#333"/><rect x="1" y="1" width="14" height="4" fill="#444"/><path d="M8 6 V13 M5 10 L8 13 L11 10" stroke="#2a5fa0" stroke-width="1.500" fill="none"/></svg><span class="lbl">Fill</span><svg class="chev m2"><use href="#chev"/></svg></div>
<div class="sm"><svg class="i16" viewBox="0 0 16 16"><path d="M9 1 L15 6 L8 15 L2 11Z" fill="#e06a80"/><path d="M2 11 L5 6 L11 11 L8 15Z" fill="#f2a8b4"/></svg><span class="lbl">Clear</span><svg class="chev m2"><use href="#chev"/></svg></div>
</div>
<div class="big-btn w44"><svg class="i34" viewBox="0 0 30 30"><text x="6" y="13" class="svgb" font-size="15" text-anchor="middle" fill="#2a5fa0">A</text><text x="6" y="28" class="svgb" font-size="15" text-anchor="middle" fill="#7b3fa8">Z</text><path d="M12 8 H29 L23 17 V27 H19 V17Z" fill="#888" stroke="#444" stroke-width=".7"/></svg><span class="lbl">Sort &amp;<br>Filter <svg class="chev"><use href="#chev"/></svg></span></div>
<div class="big-btn w44"><svg class="i34" viewBox="0 0 30 30"><circle cx="18" cy="11" r="9" fill="#fff" stroke="#2a5fa0" stroke-width="2.500"/><path d="M11 18 L3 28" stroke="#2a5fa0" stroke-width="4"/></svg><span class="lbl">Find &amp;<br>Select <svg class="chev"><use href="#chev"/></svg></span></div>
</div>
<div class="glabel">Editing</div>
</section>
<svg class="collapse" viewBox="0 0 12 7"><path d="M1 6 L6 1 L11 6" fill="none" stroke="#222"/></svg>
</div>

<div class="fbar">
<div class="namebox"><b class="tri tri-d"></b></div>
<span class="fdots"></span>
<div class="fbtns"><svg viewBox="0 0 12 12"><path d="M1 1 L11 11 M11 1 L1 11" stroke="#888" stroke-width="1.400"/></svg><svg viewBox="0 0 12 12"><path d="M1 6 L5 10 L11 1" fill="none" stroke="#888" stroke-width="2"/></svg><i class="fx">fx</i></div>
<div class="finput"><svg class="chev fchev"><use href="#chev"/></svg></div>
</div>

<div class="sheet">
<div class="gridwrap">
<div class="colheads">
<div class="corner"><i></i></div>
<span class="ch w65">A</span><span class="ch w126">B</span><span class="ch">C</span><span class="ch">D</span><span class="ch">E</span><span class="ch">F</span><span class="ch">G</span><span class="ch ch-sel">H</span><span class="ch">I</span><span class="ch">J</span><span class="ch">K</span><span class="ch">L</span><span class="ch">M</span><span class="ch">N</span><span class="ch">O</span><span class="ch">P</span><span class="ch">Q</span><span class="ch">R</span><span class="ch">S</span><span class="ch">T</span><span class="ch">U</span><span class="ch">V</span><span class="ch">W</span><span class="ch">X</span><span class="ch">Y</span>
</div>
<div class="gbodyrow">
<div class="rowheads">
<span>1</span><span>2</span><span>3</span><span>4</span><span>5</span><span>6</span><span>7</span><span>8</span><span>9</span><span>10</span><span>11</span><span>12</span><span>13</span><span>14</span><span>15</span><span>16</span><span>17</span><span>18</span><span>19</span><span>20</span><span>21</span><span>22</span><span>23</span><span>24</span><span>25</span><span>26</span><span>27</span><span>28</span><span>29</span><span>30</span><span class="rh-sel">31</span><span>32</span><span>33</span><span>34</span><span>35</span><span>36</span><span>37</span><span>38</span><span>39</span>
</div>
<div class="cells">
<div class="table">
<div class="c c-title">All Stocks (2018)</div>
<div class="c c-blank"></div>
<div class="c">Ticker</div><div class="c">Total Daily Volume</div><div class="c">Return</div>
<div class="c">AY</div><div class="c n">83079900</div><div class="c n">-0.07285</div>
<div class="c">CSIQ</div><div class="c n">200879900</div><div class="c n">-0.16336</div>
<div class="c">DQ</div><div class="c n">107873900</div><div class="c n">-0.62602</div>
<div class="c">ENPH</div><div class="c n">607473500</div><div class="c n">0.819231</div>
<div class="c">FSLR</div><div class="c n">478113900</div><div class="c n">-0.39713</div>
<div class="c">HASI</div><div class="c n">104340600</div><div class="c n">-0.20658</div>
<div class="c">JKS</div><div class="c n">158309000</div><div class="c n">-0.60535</div>
<div class="c">RUN</div><div class="c n">502757100</div><div class="c n">0.839527</div>
<div class="c">SEDG</div><div class="c n">237212300</div><div class="c n">-0.07753</div>
<div class="c">SPWR</div><div class="c n">538024300</div><div class="c n">-0.44593</div>
<div class="c">TERP</div><div class="c n">151434700</div><div class="c n">-0.04996</div>
<div class="c">VSLR</div><div class="c n">136539100</div><div class="c n">-0.03544</div>
</div>
<div class="xbtn xbtn-run">Run Analysis for all Stocks</div>
<div class="xbtn xbtn-clear">Clear</div>
<div class="cursor"><i></i></div>
</div>
</div>
</div>
<div class="vscroll"><b class="vb"><i class="va"></i></b><b class="vthumb"></b><span class="vspace"></span><b class="vb"><i class="vd"></i></b></div>
</div>

<div class="sheettabs">
<div class="snav"><i class="nl"></i><i class="nr"></i></div>
<span class="stab w53">2017</span><span class="stab w52">2018</span><span class="stab w98">DQ Analysis</span><span class="stab stab-on">All Stocks Analysis</span><span class="stab s-last">Sheet1</span>
<svg class="splus" viewBox="0 0 16 16"><circle cx="8" cy="8" r="7" fill="none" stroke="#fff" stroke-width="1.300"/><path d="M8 4 V12 M4 8 H12" stroke="#fff" stroke-width="1.500"/></svg>
<span class="sdots"></span>
<div class="hscroll"><b class="hb"><i class="nl dk"></i></b><b class="hthumb"></b><span class="hgap"></span><b class="hb"><i class="nr dk"></i></b></div>
</div>

<div class="status">
<span class="ready">Ready</span>
<svg class="st-cal" viewBox="0 0 14 16"><rect x="0" y="0" width="7" height="6" fill="#eee"/><path d="M3 7 H13 V15 H3Z M5 9 H11 M5 11 H11 M5 13 H11" fill="#666" stroke="#eee"/></svg>
<svg class="st-acc" viewBox="0 0 16 16"><path d="M8 2 A6 6 0 1 0 14 8" fill="none" stroke="#eee" stroke-dasharray="3 1.500"/><path d="M5 11 L8 15 L12 9" fill="none" stroke="#eee"/></svg>
<span class="acc">Accessibility: Good to go</span>
<span class="st-right">
<svg class="st-disp" viewBox="0 0 16 16"><rect width="14" height="9" fill="#eee"/><circle cx="11" cy="12" r="4" fill="#eee"/><circle cx="11" cy="12" r="1.500" fill="#666"/></svg>
<span class="disp">Display Settings</span>
<span class="view view-on"><svg viewBox="0 0 14 14"><path d="M.5.5 H13.500 V13.500 H.5Z M.5 5 H13.500 M.5 9.500 H13.500 M5 .5 V13.500 M9.500 .5 V13.500" fill="none" stroke="#fff"/></svg></span>
<span class="view"><svg viewBox="0 0 14 14"><path d="M1.500.5 H12.500 V13.500 H1.500Z M4 4 H10 M4 7 H10 M4 10 H10" fill="none" stroke="#fff"/></svg></span>
<span class="view"><svg viewBox="0 0 14 14"><path d="M.5.5 H13.500 V13.500 H.5Z" fill="none" stroke="#fff"/><path d="M.5 .5 H5 V9 H.5Z M8 .5 H13.500 V6 H8Z" fill="#fff"/></svg></span>
<span class="zminus"></span><span class="slider"><i></i></span><span class="zplus"></span>
<span class="zpct">100%</span>
</span>
</div>

<div class="dialog">
<div class="dlg-head"><span>Microsoft Excel</span><svg class="dlg-x" viewBox="0 0 11 11"><path d="M.5 .5 L10.500 10.500 M10.500 .5 L.5 10.500" stroke="#111"/></svg></div>
<div class="dlg-body">This code ran in 0.765625 seconds for the year 2017</div>
<div class="dlg-foot"><span class="dlg-ok">OK</span></div>
</div>
</main>
<footer class="taskbar tb-right">
<div class="tb-start"><svg class="tb-win"><use href="#win"/></svg></div>
<div class="tb-start"><svg class="tb-search"><use href="#search"/></svg></div>
<div class="tb-i"><svg><use href="#sonic"/></svg></div>
<div class="tb-i on stacked"><svg><use href="#explorer"/></svg></div>
<div class="tb-i"><svg><use href="#sw"/></svg></div>
<div class="tb-i"><svg><use href="#compW"/></svg></div>
<div class="tb-i"><svg><use href="#compY"/></svg></div>
<div class="tb-i on"><svg><use href="#edge"/></svg></div>
<div class="tb-i"><svg><use href="#swrx"/></svg></div>
<div class="tb-i"><svg><use href="#uhub"/></svg></div>
<div class="tb-i"><svg><use href="#net"/></svg></div>
<div class="tb-i"><svg><use href="#rocket"/></svg></div>
<div class="tb-i on"><svg><use href="#teams"/></svg></div>
<div class="tb-i on"><svg><use href="#chromeface"/></svg></div>
<div class="tb-i on"><svg><use href="#chromeface2"/></svg></div>
<div class="tb-i active"><svg><use href="#xl"/></svg></div>
<div class="tb-i on stacked"><svg><use href="#note"/></svg></div>
<div class="clock"><span>3:35 PM</span><span>7/11/2022</span></div>
</footer>
<div class="below"></div>
</section>
</div>
</body>
</html>
```
FILE: styles.css
```css
* { box-sizing: border-box; }
html, body { margin: 0; padding: 0; background: #000; }
body { width: 3600px; height: 1080px; overflow: hidden; font-family: "Open Sans", "Noto Sans", sans-serif; color: #fff; }
.sprite { position: absolute; width: 0; height: 0; }
.sprite-lib { display: none; }
.svgt { font-family: "Liberation Sans", sans-serif; font-weight: 400; }
.svgb { font-family: "Liberation Sans", sans-serif; font-weight: 700; }
.screens { display: flex; width: 3600px; height: 1080px; }

/* left monitor */
.monitor-left { width: 1920px; height: 1080px; display: flex; flex-direction: column; background: #000; }
.desktop { flex: 1; padding-top: 7px; overflow: hidden; }
.dgrid { display: grid; grid-template-columns: repeat(14, 95px); grid-template-rows: repeat(8, 123px); margin-left: -2px; }
.di { display: flex; flex-direction: column; align-items: center; }
.dico { position: relative; width: 60px; height: 60px; }
.ic { width: 60px; height: 60px; display: block; }
.sc { position: absolute; left: 1px; bottom: 0; width: 17px; height: 18px; }
.dl { margin-top: 4px; font-size: 14px; line-height: 20px; text-align: center; white-space: nowrap; }
.c0 { grid-column: 1; } .c1 { grid-column: 2; } .c2 { grid-column: 3; } .c3 { grid-column: 4; }
.c5 { grid-column: 6; } .c6 { grid-column: 7; } .c7 { grid-column: 8; } .c8 { grid-column: 9; } .c13 { grid-column: 14; }
.r0 { grid-row: 1; } .r1 { grid-row: 2; } .r2 { grid-row: 3; } .r3 { grid-row: 4; } .r4 { grid-row: 5; } .r5 { grid-row: 6; } .r6 { grid-row: 7; } .r7 { grid-row: 8; }

/* taskbars */
.taskbar { display: flex; align-items: center; background: #1c1c1c; flex: none; }
.tb-left { height: 50px; }
.tb-right { height: 40px; }
.tb-start { display: flex; align-items: center; justify-content: center; height: 100%; }
.tb-left .tb-start { width: 61.5px; }
.tb-right .tb-start { width: 49px; }
.tb-win { width: 25px; height: 25px; }
.tb-search { width: 25px; height: 25px; }
.tb-right .tb-win, .tb-right .tb-search { width: 18px; height: 18px; }
.tb-i { position: relative; display: flex; align-items: center; justify-content: center; height: 100%; }
.tb-left .tb-i { width: 62px; }
.tb-right .tb-i { width: 49px; }
.tb-i svg { display: block; }
.tb-left .tb-i svg { width: 32px; height: 32px; }
.tb-right .tb-i svg { width: 26px; height: 26px; }
.tb-i.on::after, .tb-i.active::after { content: ""; position: absolute; bottom: 0; height: 3px; background: #76b9ed; left: 6px; right: 5px; }
.tb-right .tb-i.on::after { left: 5px; right: 4px; height: 2px; }
.tb-i.stacked::after { right: 15px; box-shadow: 10px 0 0 #5e95c0; }
.tb-right .tb-i.stacked::after { right: 9px; box-shadow: 8px 0 0 #5e95c0; }
.tb-i.active { background: #454545; }
.tb-i.active::after { left: 0; right: 0; }
.tray { margin-left: auto; display: flex; align-items: center; height: 100%; color: #fff; }
.tb-left .tray { width: 322px; }
.t-chev { width: 16px; height: 9px; margin-left: 3px; }
.t-n { width: 19px; height: 20px; margin-left: 11px; }
.t-bat { width: 21px; height: 14px; margin-left: 10px; }
.t-wifi { width: 16px; height: 16px; margin-left: 12px; }
.t-vol { width: 20px; height: 16px; margin-left: 12px; }
.t-drop { width: 18px; height: 16px; margin-left: 11px; }
.clock { display: flex; flex-direction: column; align-items: flex-end; font-size: 14px; line-height: 22px; text-align: center; }
.tb-left .clock { width: 72px; margin-left: 12px; align-items: center; }
.tb-right .clock { margin-left: auto; margin-right: 7px; font-size: 13px; line-height: 18px; color: #f0f0f0; }
.notif { position: relative; width: 32px; height: 26px; margin-left: 22px; }
.t-note { position: absolute; left: 0; top: 0; width: 20px; height: 18px; }
.nbadge { position: absolute; left: 9px; top: 8px; width: 20px; height: 20px; border: 1px solid #777; border-radius: 50%; background: #1c1c1c; font-size: 12px; font-weight: 700; line-height: 18px; text-align: center; }
.desk-edge { width: 1px; height: 100%; background: #6a6a6a; margin-left: 14px; }
.below { height: 30px; background: #000; }

/* right monitor / excel */
.monitor-right { width: 1680px; height: 1080px; display: flex; flex-direction: column; }
.excel { position: relative; height: 1010px; display: flex; flex-direction: column; background: #666; overflow: hidden; }
.head { position: relative; height: 64px; background: #646464; flex: none; }
.birds { position: absolute; right: 0; top: 0; width: 500px; height: 64px; }
.titlebar { position: relative; height: 34px; display: flex; align-items: center; }
.qat { position: relative; width: 160px; height: 34px; display: flex; align-items: center; padding-left: 22px; }
.q-save { width: 14px; height: 14px; margin-right: 15px; }
.q-undo { width: 16px; height: 16px; }
.q-c1 { margin: 0 7px 0 5px; }
.q-redo { width: 14px; height: 16px; }
.q-c2 { margin: 0 9px 0 6px; }
.q-cust { width: 8px; height: 8px; margin-left: 6px; }
.chev { width: 8px; height: 5px; flex: none; display: inline-block; }
.doc-title { position: absolute; left: 766px; top: 0; line-height: 33px; font-size: 11.5px; color: #c0c0c0; white-space: pre; }
.win-area { position: absolute; left: 1341px; top: 0; height: 34px; width: 339px; display: flex; align-items: center; }
.warn { width: 16px; height: 16px; }
.user { margin-left: 10px; width: 92px; font-size: 12.5px; color: #c0c0c0; white-space: nowrap; }
.avatar { width: 24px; height: 24px; margin-left: 2px; }
.w-disp { width: 14px; height: 12px; margin-left: 27px; }
.w-min { width: 12px; height: 12px; margin-left: 34px; }
.w-max { width: 12px; height: 12px; margin-left: 34px; }
.w-x { width: 12px; height: 12px; margin-left: 34px; }
.tabs { position: relative; height: 30px; display: flex; align-items: center; padding-left: 6px; }
.tab { height: 30px; line-height: 30px; padding: 0 13.1px; font-size: 11.5px; color: #fff; white-space: nowrap; }
.t-file { padding: 0 20px 0 14px; }
.tab-on { background: #b1b1b1; color: #1f1f1f; }
.bulb { width: 12px; height: 18px; margin-left: 10px; }
.tell { margin-left: 17px; font-size: 11.5px; color: #fff; }
.share { margin-left: auto; margin-right: 25px; font-size: 11.5px; display: flex; align-items: center; }
.share-i { width: 16px; height: 16px; margin-right: 3px; }

/* ribbon */
.ribbon { position: relative; height: 93px; background: #b1b1b1; color: #222; display: flex; padding-top: 4px; flex: none; font-size: 11.2px; }
.group { height: 84px; border-right: 1px solid #8a8a8a; display: flex; flex-direction: column; flex: none; }
.g-clip { width: 164.5px; } .g-font { width: 232px; } .g-align { width: 280.5px; } .g-num { width: 156px; }
.g-styles { width: 381px; } .g-cells { width: 143px; } .g-edit { width: 200px; }
.g-cells .row { padding-left: 8px; }
.gbody { flex: 1; min-height: 0; }
.row { display: flex; }
.glabel { position: relative; height: 16px; line-height: 23px; text-align: center; font-size: 11.2px; color: #222; flex: none; }
.launch { position: absolute; right: 3px; top: 7px; width: 8px; height: 8px; border: 1px solid #444; border-width: 1px 0 0 1px; }
.launch::after { content: ""; position: absolute; right: -1px; bottom: -1px; width: 5px; height: 1px; background: #444; transform: rotate(45deg); transform-origin: right; }
.g-clip .row { padding-left: 13px; }
.paste { width: 40px; display: flex; flex-direction: column; align-items: center; padding-top: 6px; }
.paste-i { width: 30px; height: 30px; margin-bottom: 2px; }
.paste .lbl { line-height: 16px; }
.paste .chev { margin-top: 4px; }
.lbl { white-space: nowrap; }
.col3 { display: flex; flex-direction: column; }
.sm { height: 23px; display: flex; align-items: center; }
.i16 { width: 16px; height: 16px; flex: none; }
.sm .i16 { margin-right: 4px; }
.m8 { margin-left: 8px; } .m12 { margin-left: 10px; } .m14 { margin-left: 14px; } .m2 { margin-left: 3px; }
.stack { padding-top: 7px; }
.r-top { height: 23px; display: flex; align-items: center; }
.r-bot { height: 23px; margin-top: 8px; display: flex; align-items: center; }
.combo { position: relative; height: 23px; background: #d2d2d2; border: 1px solid #8a8a8a; padding-left: 2px; line-height: 21px; font-size: 11.5px; flex: none; }
.w116 { width: 116px; margin-left: 9px; } .w49 { width: 49px; margin-left: 3px; } .w140 { width: 140px; margin-left: 9px; }
.tri { position: absolute; right: 4px; top: 9px; border: 3.5px solid transparent; border-top: 4px solid #333; border-bottom: 0; }
.grow, .shrink { position: relative; width: 24px; text-align: center; line-height: 23px; color: #333; }
.grow { font-size: 17px; margin-left: 1px; } .shrink { font-size: 14px; }
.up, .down { position: absolute; right: 3px; top: 3px; border: 3px solid transparent; }
.up { border-bottom: 3px solid #2a5fa0; border-top: 0; } .down { border-top: 3px solid #2a5fa0; border-bottom: 0; }
.f-bot { padding-left: 7px; }
.tbtn { width: 24px; text-align: center; text-decoration: none; font-size: 13px; font-family: "Liberation Sans", sans-serif; }
u.tbtn { text-decoration: underline; }
.vsep { display: block; width: 1px; height: 23px; background: #8f8f8f; margin: 0 3px; flex: none; }
.f-bot .chev { margin: 0 3px; }
.f-bot .vsep { margin: 0 5px; }
.f-bot > .i16 { margin-left: 3px; margin-right: 2px; }
.colored { position: relative; width: 22px; height: 22px; display: flex; justify-content: center; font-size: 15px; line-height: 17px; color: #222; }
.f-bot .colored { margin: 0 1px; }
.bar { position: absolute; left: 3px; right: 3px; bottom: 0; height: 4px; }
.yellow { background: #ffff00; } .red { background: #ff0000; }
.a-top, .a-bot { padding-left: 8px; }
.i24 { width: 24px; height: 23px; flex: none; display: block; }
.i24.sel { background: #8f8f8f; }
.gap14 { margin-left: 18px; }
.a-top .chev { margin-left: 1px; }
.wrapi { width: 22px; font-size: 10px; line-height: 9px; text-align: center; font-weight: 600; }
.n-bot { padding-left: 8px; }
.n-bot .chev { margin: 0 3px; }
.sym { text-align: center; font-family: "Liberation Sans", sans-serif; }
.big { width: 22px; font-size: 17px; }
.pct { width: 24px; margin-left: 2px; font-size: 15px; }
.comma { width: 22px; font-size: 16px; font-weight: 700; line-height: 12px; }
.n-bot .vsep { margin: 0 5px; }
.dec { width: 22px; font-size: 9px; line-height: 10px; text-align: center; font-family: "Liberation Sans", sans-serif; }
.dec em { color: #2a5fa0; font-style: normal; font-weight: 700; }
.big-btn { display: flex; flex-direction: column; align-items: center; flex: none; padding-top: 3px; text-align: center; }
.big-btn .lbl { line-height: 16px; margin-top: 0; }
.big-btn > .chev { margin-top: 5px; }
.i34 { width: 31px; height: 32px; flex: none; margin-bottom: 2px; }
.w80 { width: 81px; margin-left: 4px; } .w52 { width: 52px; } .w42 { width: 42.5px; } .w44 { width: 44px; } .w100 { width: 93px; margin-left: 10px; }
.gallery { margin: 2px 0 0 4px; width: 230px; height: 62px; background: #d3d3d3; border: 1px solid #a0a0a0; display: flex; flex: none; }
.cells-g { display: grid; grid-template-columns: 103px 100px; grid-template-rows: 26px 24px; column-gap: 4px; row-gap: 4px; padding: 3px 0 0 2px; width: 214px; }
.st { display: flex; align-items: center; padding-left: 5px; font-size: 12.5px; font-family: "Lato", sans-serif; height: 22px; align-self: center; }
.st-normal { background: #fff; color: #000; border: 2px solid #666; height: 26px; padding-left: 4px; }
.st-bad { background: #ffc7ce; color: #9c0006; }
.st-good { background: #c6efce; color: #006100; margin: 0 2px; }
.st-neutral { background: #ffeb9c; color: #9c5700; }
.gscroll { flex: 1; display: flex; flex-direction: column; gap: 1px; background: #999; border-left: 1px solid #999; }
.gscroll b { flex: 1; background: #cfcfcf; position: relative; }
.up-g::after, .dn-g::after, .more-g::after { content: ""; position: absolute; left: 3px; top: 8px; border: 3.5px solid transparent; }
.up-g::after { border-bottom: 4px solid #999; border-top: 0; }
.dn-g::after { border-top: 4px solid #333; border-bottom: 0; }
.more-g::after { border-top: 4px solid #333; border-bottom: 0; box-shadow: 0 -2px 0 -1px #333; }
.sigma { width: 17px; margin-right: 4px; font-size: 23px; line-height: 20px; font-family: "Liberation Sans", sans-serif; color: #222; text-align: center; }
.collapse { position: absolute; left: 1661px; top: 80px; width: 10px; height: 6px; }

/* formula bar */
.fbar { height: 46px; display: flex; align-items: flex-start; padding: 10px 6px 0 5px; background: #646464; flex: none; }
.namebox { position: relative; width: 102px; height: 26px; background: #b1b1b1; border: 1px solid #444; }
.tri-d { top: 10px; right: 6px; }
.fdots { width: 3px; height: 12px; margin: 7px 12px 0 14px; background: radial-gradient(circle, #fff 1px, transparent 1.300px) 0 0 / 3px 5px; }
.fbtns { width: 109px; height: 26px; background: #b1b1b1; border: 1px solid #444; display: flex; align-items: center; gap: 23px; padding-left: 13px; }
.fbtns svg { width: 12px; height: 12px; }
.fx { font: italic 700 13px "Liberation Serif", serif; color: #888; margin-left: -2px; }
.finput { position: relative; flex: 1; height: 26px; margin-left: 5px; background: #b1b1b1; border: 1px solid #444; }
.fchev { position: absolute; right: 4px; top: 9px; }

/* sheet */
.sheet { height: 757px; display: flex; flex: none; background: #646464; overflow: hidden; }
.gridwrap { width: 1658px; flex: none; overflow: hidden; display: flex; flex-direction: column; font-family: "Lato", sans-serif; font-size: 13.4px; }
.colheads { display: flex; height: 19px; flex: none; color: #fff; }
.corner { position: relative; width: 25px; height: 19px; flex: none; border-right: 1px solid #aaa; border-bottom: 1px solid #aaa; }
.corner i { position: absolute; right: 2px; bottom: 2px; border: 6.5px solid transparent; border-right-color: #cfcfcf; border-bottom-color: #cfcfcf; }
.ch { width: 64px; flex: none; text-align: center; line-height: 18px; border-right: 1px solid #aaa; border-bottom: 1px solid #aaa; }
.ch.w65 { width: 65px; } .ch.w126 { width: 126px; }
.ch-sel { background: #262626; border-bottom: 2px solid #217346; }
.gbodyrow { flex: 1; display: flex; min-height: 0; }
.rowheads { width: 25px; flex: none; display: flex; flex-direction: column; }
.rowheads span { height: 19px; flex: none; text-align: center; line-height: 18px; border-right: 1px solid #aaa; border-bottom: 1px solid #aaa; }
.rowheads .rh-sel { background: #262626; border-right: 2px solid #217346; }
.cells { position: relative; flex: 1; background-color: #fff;
  background-image: repeating-linear-gradient(180deg, transparent 0 18px, #d4d4d4 18px 19px), linear-gradient(#d4d4d4, #d4d4d4), linear-gradient(#d4d4d4, #d4d4d4), linear-gradient(#d4d4d4, #d4d4d4), repeating-linear-gradient(90deg, transparent 0 63px, #d4d4d4 63px 64px);
  background-size: 100% 100%, 1px 100%, 1px 100%, 1px 100%, 100% 100%;
  background-position: 0 0, 64px 0, 190px 0, 254px 0, 255px 0;
  background-repeat: no-repeat; color: #111; }
.table { display: grid; grid-template-columns: 65px 126px 64px; grid-auto-rows: 19px; font-size: 14.2px; }
.c { height: 18px; line-height: 18px; padding: 0 3px; white-space: nowrap; overflow: visible; }
.n { text-align: right; font-size: 13.6px; letter-spacing: -.75px; }
.c-title { grid-column: 1 / -1; background: #fff; width: 190px; }
.c-blank { grid-column: 1 / -1; }
.xbtn { position: absolute; left: 385px; width: 263px; height: 50px; background: #f0f0f0; display: flex; align-items: center; justify-content: center; color: #111; }
.xbtn-run { top: 80px; border-top: 2px solid #666; border-left: 2px solid #666; }
.xbtn-clear { top: 195px; border-bottom: 2px solid #666; border-right: 2px solid #666; }
.cursor { position: absolute; left: 510px; top: 569px; width: 65px; height: 20px; border: 2px solid #217346; }
.cursor i { position: absolute; right: -4px; bottom: -4px; width: 6px; height: 6px; background: #217346; border: 1px solid #fff; }
.vscroll { width: 15px; margin: 2px 0 0 4px; background: #555; flex: none; display: flex; flex-direction: column; border: 1px solid #444; }
.vb { position: relative; height: 14px; background: #b1b1b1; flex: none; margin-bottom: 1px; }
.va, .vd { position: absolute; left: 2px; top: 5px; border: 4px solid transparent; }
.va { border-bottom: 4px solid #333; border-top: 0; } .vd { border-top: 4px solid #333; border-bottom: 0; }
.vthumb { height: 17px; background: #9a9a9a; flex: none; }
.vspace { flex: 1; }

/* sheet tabs */
.sheettabs { height: 28px; display: flex; align-items: flex-start; background: #6a6a6a; border-top: 1px solid #9a9a9a; border-bottom: 1px solid #4f4f4f; flex: none; font-size: 12.5px; color: #f2f2f2; }
.snav { position: relative; width: 100px; height: 24px; display: flex; gap: 22px; padding: 8px 0 0 27px; flex: none; }
.nl, .nr { display: block; width: 0; height: 0; border: 4px solid transparent; }
.nl { border-right: 4px solid #aaa; border-left: 0; } .nr { border-left: 4px solid #aaa; border-right: 0; }
.dk.nl { border-right-color: #333; } .dk.nr { border-left-color: #333; }
.stab { height: 24px; margin-top: 1px; line-height: 22px; text-align: center; border-left: 1px solid #9a9a9a; white-space: nowrap; flex: none; }
.w53 { width: 53px; } .w52 { width: 52px; } .w98 { width: 98px; }
.stab-on { width: 139px; height: 26px; margin-top: -1px; background: #fff; color: #1d6f42; font-weight: 700; border: 0; border-bottom: 2px solid #1d6f42; line-height: 26px; font-size: 12.3px; }
.s-last { width: 64px; border-left: 0; border-right: 1px solid #9a9a9a; }
.splus { width: 17px; height: 17px; margin: 4px 0 0 32px; }
.sdots { width: 3px; height: 14px; margin: 5px 14px 0 auto; background: radial-gradient(circle, #fff 1px, transparent 1.300px) 0 0 / 3px 5px; }
.hscroll { width: 634px; height: 16px; margin: 6px 21px 0 0; display: flex; background: #555; border: 1px solid #3e3e3e; flex: none; }
.hb { display: flex; align-items: center; justify-content: center; width: 14px; background: #9a9a9a; flex: none; border-right: 1px solid #444; }
.hthumb { width: 579px; background: #949494; border-right: 1px solid #444; }
.hgap { width: 25px; }

/* status */
.status { height: 22px; display: flex; align-items: center; background: #6a6a6a; flex: none; font-size: 11.2px; color: #f2f2f2; padding-left: 7px; }
.ready { width: 51px; }
.st-cal { width: 14px; height: 16px; }
.st-acc { width: 17px; height: 17px; margin-left: 16px; }
.acc { margin-left: 2px; }
.st-right { margin-left: auto; display: flex; align-items: center; height: 22px; padding-right: 8px; }
.st-disp { width: 16px; height: 16px; margin-right: 2px; }
.disp { width: 101px; }
.view { width: 40px; height: 22px; display: flex; align-items: center; justify-content: center; }
.view svg { width: 15px; height: 16px; }
.view-on { background: #4c4c4c; }
.zminus { position: relative; width: 8px; height: 1px; background: #fff; margin-left: 5px; }
.slider { position: relative; width: 100px; height: 1px; background: #fff; margin-left: 5px; }
.slider i { position: absolute; left: 46px; top: -8px; width: 5px; height: 17px; background: #fff; }
.zplus { position: relative; width: 8px; height: 8px; margin-left: 4px; background: linear-gradient(#fff, #fff) center / 8px 1px no-repeat, linear-gradient(#fff, #fff) center / 1px 8px no-repeat; }
.zpct { margin-left: 14px; font-size: 11px; }

/* dialog */
.dialog { position: absolute; left: 696px; top: 458px; width: 304px; height: 149px; background: #fff; color: #222; display: flex; flex-direction: column; border-top: 1px solid #555; border-left: 1px solid #555; box-shadow: 0 4px 14px rgba(0,0,0,.35); }
.dlg-head { height: 29px; display: flex; align-items: center; padding: 0 13px 0 8px; font-size: 13.4px; color: #111; justify-content: space-between; flex: none; }
.dlg-x { width: 11px; height: 11px; }
.dlg-body { flex: 1; padding: 26px 0 0 10px; font-size: 11.5px; letter-spacing: -.38px; color: #3a3a4a; line-height: 18px; white-space: nowrap; }
.dlg-foot { height: 50px; background: #f0f0f0; display: flex; justify-content: flex-end; align-items: flex-start; padding: 14px 18px 0 0; flex: none; }
.dlg-ok { width: 78px; height: 24px; background: #e1e1e1; border: 2px solid #0078d7; outline: 1px dotted #333; outline-offset: -3px; text-align: center; line-height: 20px; font-size: 12.5px; color: #111; }
```
